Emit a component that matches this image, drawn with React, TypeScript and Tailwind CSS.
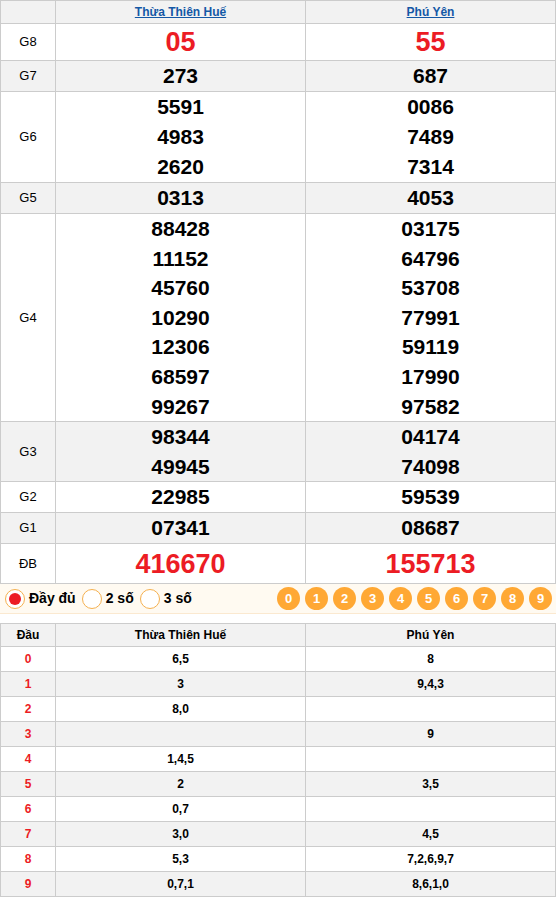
import React from 'react'

const PROVINCES = ['Thừa Thiên Huế', 'Phú Yên']

const PRIZES: { label: string; values: string[][]; big?: boolean; lead: string }[] = [
  { label: 'G8', values: [['05'], ['55']], big: true, lead: 'h-[36px]' },
  { label: 'G7', values: [['273'], ['687']], lead: 'h-[30px]' },
  { label: 'G6', values: [['5591', '4983', '2620'], ['0086', '7489', '7314']], lead: 'h-[90px]' },
  { label: 'G5', values: [['0313'], ['4053']], lead: 'h-[30px]' },
  {
    label: 'G4',
    values: [
      ['88428', '11152', '45760', '10290', '12306', '68597', '99267'],
      ['03175', '64796', '53708', '77991', '59119', '17990', '97582'],
    ],
    lead: 'h-[207px]',
  },
  { label: 'G3', values: [['98344', '49945'], ['04174', '74098']], lead: 'h-[59px]' },
  { label: 'G2', values: [['22985'], ['59539']], lead: 'h-[30px]' },
  { label: 'G1', values: [['07341'], ['08687']], lead: 'h-[30px]' },
  { label: 'ĐB', values: [['416670'], ['155713']], big: true, lead: 'h-[40px]' },
]

const HEADS: [string, string][] = [
  ['6,5', '8'],
  ['3', '9,4,3'],
  ['8,0', ''],
  ['', '9'],
  ['1,4,5', ''],
  ['2', '3,5'],
  ['0,7', ''],
  ['3,0', '4,5'],
  ['5,3', '7,2,6,9,7'],
  ['0,7,1', '8,6,1,0'],
]

const cell = 'border border-[#cccccc] p-0 text-[12px] leading-[14px]'

function Radio({ checked, label }: { checked?: boolean; label: string }) {
  return (
    <div className="flex items-center gap-[4px]">
      <span className="flex h-[20px] w-[20px] items-center justify-center rounded-full border border-[#f5b04f] bg-white">
        {checked && <span className="h-[12px] w-[12px] rounded-full bg-[#ec1c24]" />}
      </span>
      <span className="text-[14px] font-bold text-black">{label}</span>
    </div>
  )
}

export default function App() {
  return (
    <div className="w-[556px] bg-white font-['Liberation_Sans',Arial,sans-serif]">
      {/* Results table */}
      <table className="w-full table-fixed border-collapse">
        <colgroup>
          <col className="w-[55px]" />
          <col />
          <col />
        </colgroup>
        <tbody>
          <tr className="bg-[#f2f2f2]">
            <td className={`${cell} h-[23px]`} />
            {PROVINCES.map((p) => (
              <td key={p} className={`${cell} text-center`}>
                <a className="font-bold text-[#1458a6] underline">{p}</a>
              </td>
            ))}
          </tr>
          {PRIZES.map((prize, i) => (
            <tr key={prize.label} className={i % 2 === 1 ? 'bg-[#f2f2f2]' : 'bg-white'}>
              <td className={`${cell} ${prize.lead} text-center text-[13px] text-black`}>{prize.label}</td>
              {prize.values.map((col, j) => (
                <td key={j} className={`${cell} text-center`}>
                  {col.map((v) => (
                    <div
                      key={v}
                      className={
                        prize.big
                          ? 'text-[27px] font-bold leading-[36px] text-[#ec1c24]'
                          : prize.label === 'G4' || prize.label === 'G3'
                          ? 'text-[21px] font-bold leading-[29.6px] text-black'
                          : 'text-[21px] font-bold leading-[30px] text-black'
                      }
                    >
                      {v}
                    </div>
                  ))}
                </td>
              ))}
            </tr>
          ))}
        </tbody>
      </table>

      {/* Filter bar */}
      <div className="flex h-[30px] items-center justify-between border-b border-[#fbe9d0] bg-[#fffaf1] pl-[5px] pr-[4px]">
        <div className="flex items-center gap-[6px]">
          <Radio checked label="Đầy đủ" />
          <Radio label="2 số" />
          <Radio label="3 số" />
        </div>
        <div className="flex items-center gap-[5px]">
          {Array.from({ length: 10 }, (_, n) => (
            <span
              key={n}
              className="flex h-[23px] w-[23px] items-center justify-center rounded-full bg-[#ffa834] text-[13px] font-bold text-white"
            >
              {n}
            </span>
          ))}
        </div>
      </div>

      {/* Loto heads table */}
      <table className="mt-[9px] w-full table-fixed border-collapse">
        <colgroup>
          <col className="w-[55px]" />
          <col />
          <col />
        </colgroup>
        <tbody>
          <tr className="bg-[#f2f2f2]">
            <td className={`${cell} h-[23px] text-center font-bold`}>Đầu</td>
            {PROVINCES.map((p) => (
              <td key={p} className={`${cell} text-center font-bold`}>
                {p}
              </td>
            ))}
          </tr>
          {HEADS.map(([a, b], n) => (
            <tr key={n} className={n % 2 === 1 ? 'bg-[#f2f2f2]' : 'bg-white'}>
              <td className={`${cell} h-[25px] text-center font-bold text-[#ec1c24]`}>{n}</td>
              <td className={`${cell} text-center font-bold text-black`}>{a}</td>
              <td className={`${cell} text-center font-bold text-black`}>{b}</td>
            </tr>
          ))}
        </tbody>
      </table>
    </div>
  )
}
